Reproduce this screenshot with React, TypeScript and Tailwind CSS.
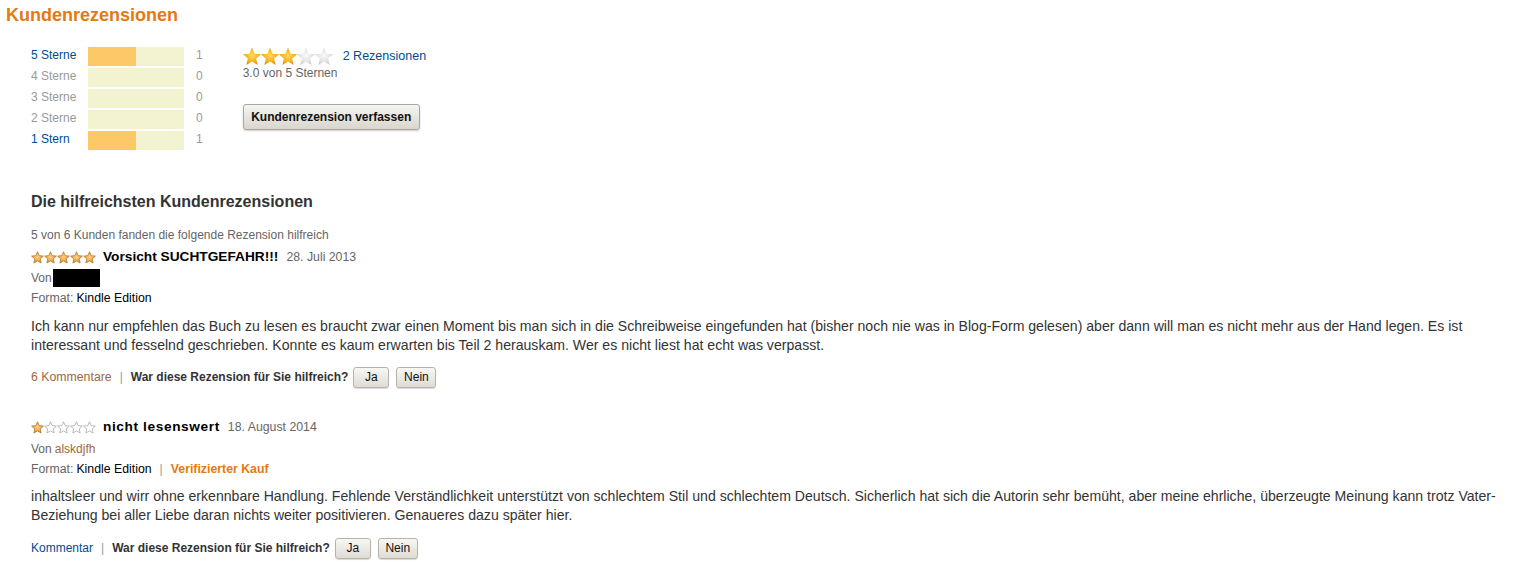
import React from "react";

const font = { fontFamily: '"Liberation Sans", Arial, sans-serif' };

function starPoints(cx: number, cy: number, R: number, r: number) {
  const pts: string[] = [];
  for (let i = 0; i < 10; i++) {
    const a = -Math.PI / 2 + (i * Math.PI) / 5;
    const rad = i % 2 === 0 ? R : r;
    pts.push(`${(cx + rad * Math.cos(a)).toFixed(2)},${(cy + rad * Math.sin(a)).toFixed(2)}`);
  }
  return pts.join(" ");
}

function BigStars({ filled }: { filled: number }) {
  return (
    <svg width="91" height="19" viewBox="0 0 91 19">
      <defs>
        <radialGradient id="gold" cx="50%" cy="45%" r="60%">
          <stop offset="0%" stopColor="#ffd95a" />
          <stop offset="60%" stopColor="#f7b11e" />
          <stop offset="100%" stopColor="#d98a06" />
        </radialGradient>
        <radialGradient id="silver" cx="50%" cy="45%" r="60%">
          <stop offset="0%" stopColor="#fafafa" />
          <stop offset="60%" stopColor="#e2e2e2" />
          <stop offset="100%" stopColor="#c4c4c4" />
        </radialGradient>
      </defs>
      {[0, 1, 2, 3, 4].map((i) => (
        <polygon
          key={i}
          points={starPoints(9 + i * 18, 10.2, 9.6, 4.4)}
          fill={i < filled ? "url(#gold)" : "url(#silver)"}
        />
      ))}
    </svg>
  );
}

function SmallStars({ filled }: { filled: number }) {
  return (
    <svg width="66" height="13" viewBox="0 0 66 13">
      <defs>
        <radialGradient id="sgold" cx="50%" cy="45%" r="60%">
          <stop offset="0%" stopColor="#fbd28a" />
          <stop offset="70%" stopColor="#e9a247" />
          <stop offset="100%" stopColor="#c9802c" />
        </radialGradient>
      </defs>
      {[0, 1, 2, 3, 4].map((i) => (
        <polygon
          key={i}
          points={starPoints(6.5 + i * 13, 7, 6.2, 2.9)}
          fill={i < filled ? "url(#sgold)" : "#ffffff"}
          stroke={i < filled ? "#b8782c" : "#a8a8a8"}
          strokeWidth="0.8"
          strokeLinejoin="round"
        />
      ))}
    </svg>
  );
}

const histo = [
  { label: "5 Sterne", count: 1 },
  { label: "4 Sterne", count: 0 },
  { label: "3 Sterne", count: 0 },
  { label: "2 Sterne", count: 0 },
  { label: "1 Stern", count: 1 },
];

function HelpRow({
  comments,
  commentClass,
  top,
}: {
  comments: string;
  commentClass: string;
  top: string;
}) {
  const btn =
    "h-[21px] rounded-[3px] border border-[#b7b3aa] bg-gradient-to-b from-[#f8f7f4] to-[#dfdcd4] text-[12px] leading-[19px] text-[#111] shadow-[0_1px_1px_rgba(0,0,0,0.15)]";
  return (
    <div className={`${top} flex h-[22px] items-center text-[12px]`}>
      <span className={commentClass}>{comments}</span>
      <span className="mx-[8px] text-[#999]">|</span>
      <span className="font-bold text-[#333]">War diese Rezension für Sie hilfreich?</span>
      <div className="ml-[5px] flex gap-[7px]">
        <button className={`${btn} w-[36px]`}>Ja</button>
        <button className={`${btn} w-[40px]`}>Nein</button>
      </div>
    </div>
  );
}

export default function App() {
  return (
    <div className="min-h-[576px] w-[1522px] bg-white" style={font}>
      <h1 className="pl-[6px] pt-[4px] text-[18px] font-bold leading-[22px] text-[#e47911]">
        Kundenrezensionen
      </h1>

      <div className="mt-[21px] flex pl-[31px]">
        <div className="flex flex-col gap-[2px]">
          {histo.map((h) => (
            <div key={h.label} className="flex h-[19px] items-start text-[12px] leading-[16px]">
              <span className={`w-[57px] ${h.count > 0 ? "text-[#004b91]" : "text-[#999]"}`}>
                {h.label}
              </span>
              <div className="flex h-[19px] w-[96px] bg-[#f4f3d1]">
                {h.count > 0 && <div className="h-full w-[48px] bg-[#fdc968]" />}
              </div>
              <span className="pl-[12px] text-[#999]">{h.count}</span>
            </div>
          ))}
        </div>

        <div className="ml-[40px] flex flex-col items-start">
          <div className="flex h-[19px] items-center">
            <BigStars filled={3} />
            <span className="ml-[9px] text-[12.5px] text-[#004b91]">2 Rezensionen</span>
          </div>
          <div className="text-[12px] leading-[15px] text-[#666]">3.0 von 5 Sternen</div>
          <button className="mt-[23px] h-[26px] w-[177px] rounded-[3px] border border-[#aaa69d] bg-gradient-to-b from-[#f6f5f2] to-[#d9d6ce] text-[12px] font-bold text-[#111] shadow-[0_1px_2px_rgba(0,0,0,0.2)]">
            Kundenrezension verfassen
          </button>
        </div>
      </div>

      <div className="pl-[31px] pr-[10px]">
        <h2 className="mt-[42px] text-[16px] font-bold leading-[20px] text-[#333]">
          Die hilfreichsten Kundenrezensionen
        </h2>

        <div className="mt-[15px] text-[12px] leading-[16px] text-[#666]">
          5 von 6 Kunden fanden die folgende Rezension hilfreich
        </div>
        <div className="mt-[4px] flex h-[20px] items-center">
          <SmallStars filled={5} />
          <span className="ml-[6px] text-[13.7px] font-bold text-black">Vorsicht SUCHTGEFAHR!!!</span>
          <span className="ml-[8px] text-[12.3px] text-[#666]">28. Juli 2013</span>
        </div>
        <div className="mt-[1px] flex h-[20px] items-center text-[12px] text-[#666]">
          <span>Von</span>
          <span className="ml-[1px] h-[18px] w-[47px] bg-black" />
        </div>
        <div className="flex h-[20px] items-center text-[12.3px]">
          <span className="text-[#666]">Format:</span>
          <span className="ml-[3px] text-black">Kindle Edition</span>
        </div>
        <p className="mt-[9px] text-[14.1px] leading-[19px] text-[#333]">
          Ich kann nur empfehlen das Buch zu lesen es braucht zwar einen Moment bis man sich in die Schreibweise eingefunden hat (bisher noch nie was in Blog-Form gelesen) aber dann will man es nicht mehr aus der Hand legen. Es ist interessant und fesselnd geschrieben. Konnte es kaum erwarten bis Teil 2 herauskam. Wer es nicht liest hat echt was verpasst.
        </p>
        <HelpRow top="mt-[11px]" comments="6 Kommentare" commentClass="text-[12.3px] text-[#a0683a]" />

        <div className="mt-[29px] flex h-[20px] items-center">
          <SmallStars filled={1} />
          <span className="ml-[6px] text-[13.7px] font-bold tracking-[0.6px] text-black">nicht lesenswert</span>
          <span className="ml-[8px] text-[12.3px] text-[#666]">18. August 2014</span>
        </div>
        <div className="mt-[2px] flex h-[20px] items-center text-[12px] text-[#666]">
          <span>Von</span>
          <span className="ml-[3px] text-[#a0683a]">alskdjfh</span>
        </div>
        <div className="flex h-[20px] items-center text-[12.3px]">
          <span className="text-[#666]">Format:</span>
          <span className="ml-[3px] text-black">Kindle Edition</span>
          <span className="mx-[8px] text-[#999]">|</span>
          <span className="font-bold text-[#e47911]">Verifizierter Kauf</span>
        </div>
        <p className="mt-[8px] text-[14.1px] leading-[19px] text-[#333]">
          inhaltsleer und wirr ohne erkennbare Handlung. Fehlende Verständlichkeit unterstützt von schlechtem Stil und schlechtem Deutsch. Sicherlich hat sich die Autorin sehr bemüht, aber meine ehrliche, überzeugte Meinung kann trotz Vater-Beziehung bei aller Liebe daran nichts weiter positivieren. Genaueres dazu später hier.
        </p>
        <HelpRow top="mt-[12px]" comments="Kommentar" commentClass="text-[#004b91]" />
      </div>
    </div>
  );
}
